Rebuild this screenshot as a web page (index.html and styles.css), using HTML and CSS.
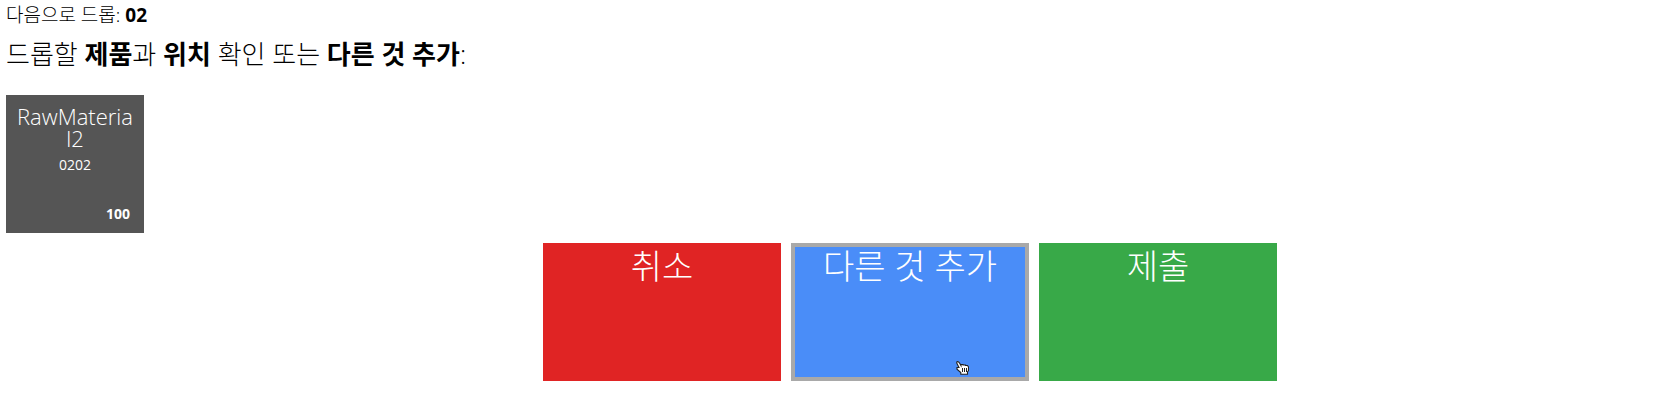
FILE: index.html
```html
<!DOCTYPE html>
<html lang="ko">
<head>
<meta charset="utf-8">
<meta name="viewport" content="width=device-width, initial-scale=1">
<title>드롭 확인</title>
<link rel="stylesheet" href="styles.css">
</head>
<body>
<main class="page">
  <p class="status">다음으로 드롭: <b>02</b></p>
  <h1 class="prompt">드롭할 <b>제품</b>과 <b>위치</b> 확인 또는 <b>다른 것 추가</b>:</h1>
  <section class="products">
    <button type="button" class="product">
      <span class="product-name">RawMaterial2</span>
      <span class="product-code">0202</span>
      <span class="product-count">100</span>
    </button>
  </section>
  <div class="actions">
    <button type="button" class="action cancel">취소</button>
    <button type="button" class="action add">다른 것 추가
      <svg class="pointer" viewBox="0 0 13 14" width="13" height="14" aria-hidden="true">
        <path d="M1 .7Q2.5.2 3.5 2L5 4.6V3.5H7V4H9.5V4.5H11.5L12.5 6V9.5L11.5 11V13.3H4.8V11.5L1 8.2V6.5H3L.7 2Z" fill="#fff" stroke="#222" stroke-width="1.1"/>
        <path d="M6.5 7V11M8.5 7V11M10.5 7V11" stroke="#222"/>
      </svg>
    </button>
    <button type="button" class="action submit">제출</button>
  </div>
</main>
</body>
</html>
```
FILE: styles.css
```css
* {
  box-sizing: border-box;
}

body {
  margin: 0;
  background: #fff;
  color: #000;
  font-family: "Open Sans", "Noto Sans CJK KR", sans-serif;
  font-weight: 300;
}

button {
  border: 0;
  color: #fff;
  font: inherit;
  cursor: pointer;
}

.page {
  padding: 3px 0 0 6px;
}

.status,
.prompt {
  margin: 0;
  font-weight: 300;
}

.status {
  font-size: 19px;
  line-height: 24px;
}

.prompt {
  margin-top: 9px;
  font-size: 26px;
  line-height: 36px;
}

b {
  font-weight: 700;
}

.products {
  display: flex;
  flex-wrap: wrap;
  gap: 10px;
  margin-top: 23px;
}

.product {
  display: flex;
  flex-direction: column;
  width: 138px;
  min-height: 138px;
  padding: 10px;
  background: #555;
  text-align: center;
}

.product-name {
  width: 100%;
  font-size: 22px;
  line-height: 22px;
  overflow-wrap: anywhere;
}

.product-code {
  width: 100%;
  margin-top: 6px;
  font-size: 14px;
  font-weight: 400;
  line-height: 20px;
}

.product-count {
  width: 100%;
  margin-top: auto;
  padding-right: 4px;
  font-size: 14px;
  font-weight: 700;
  line-height: 18px;
  text-align: right;
}

.actions {
  display: flex;
  flex-wrap: wrap;
  justify-content: center;
  gap: 10px;
  margin-top: 10px;
  padding-left: 137px;
}

.action {
  position: relative;
  display: flex;
  justify-content: center;
  align-items: flex-start;
  width: 238px;
  min-height: 138px;
  padding: 2px;
  border: 4px solid transparent;
  font-size: 34px;
  line-height: 34px;
}

.cancel {
  background: #e02424;
  border-color: #e02424;
}

.add {
  background: #4a8df8;
  border-color: #a9a9a9;
}

.submit {
  background: #38a948;
  border-color: #38a948;
}

.pointer {
  position: absolute;
  right: 56px;
  bottom: 2px;
  fill: none;
}
```
